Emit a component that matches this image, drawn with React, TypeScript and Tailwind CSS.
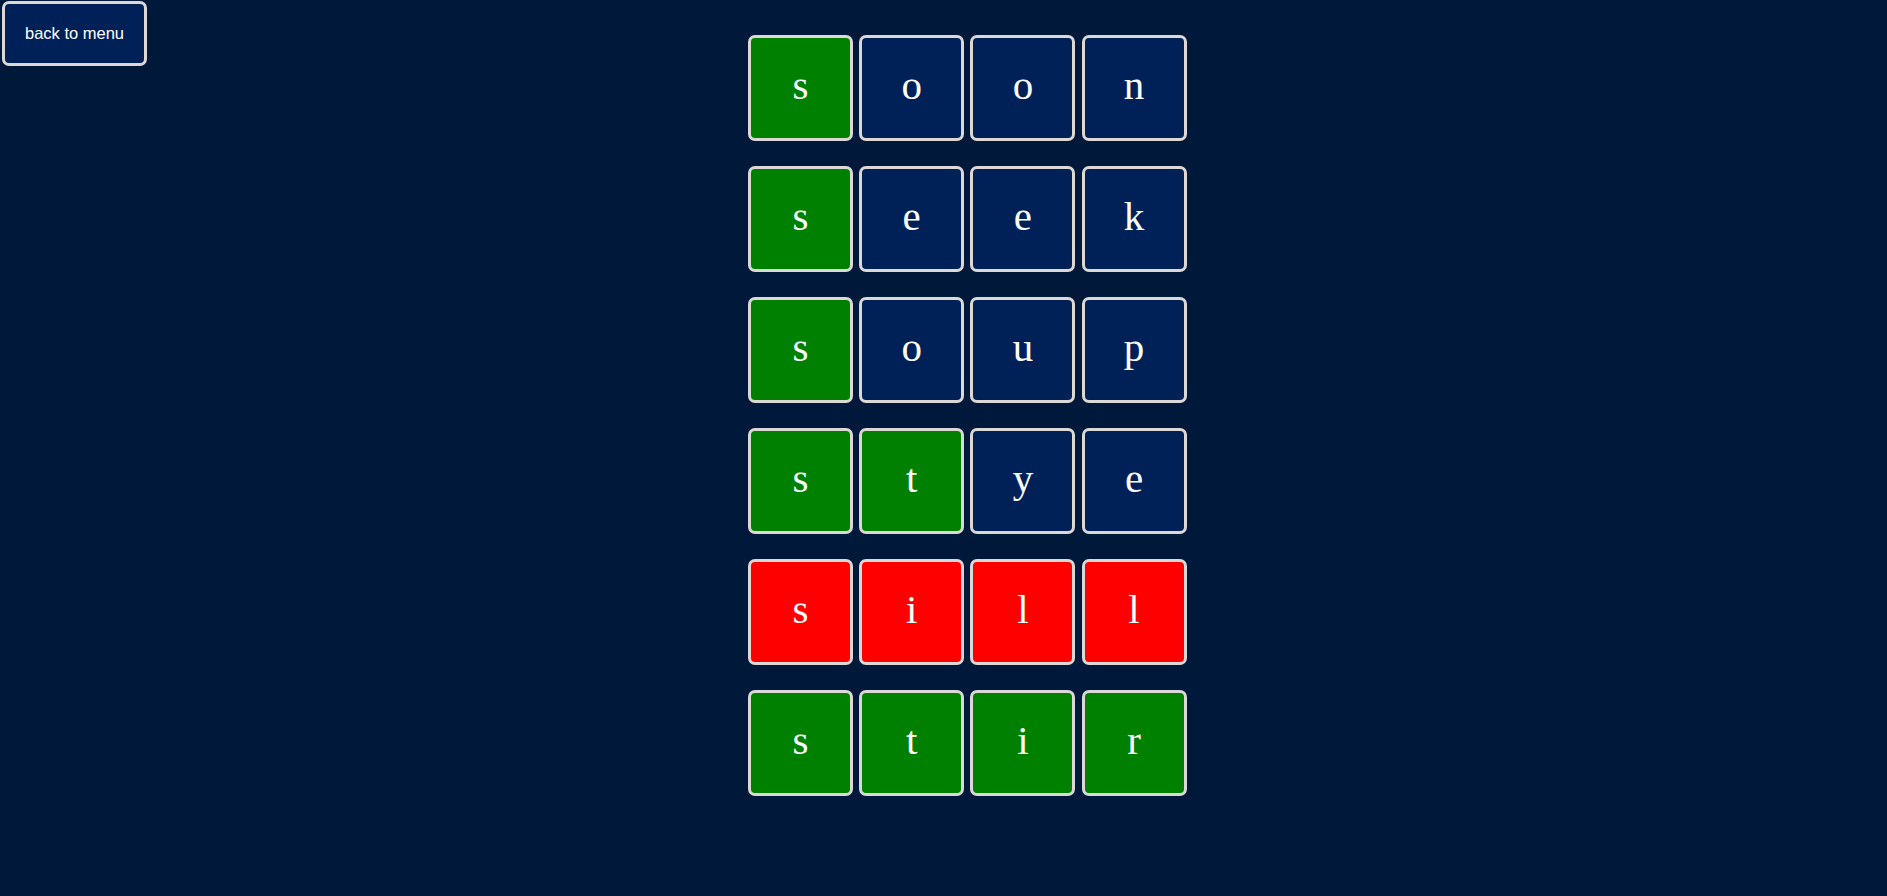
import React from "react";

type Tile = { ch: string; c: "g" | "n" | "r" };

const rows: Tile[][] = [
  [{ ch: "s", c: "g" }, { ch: "o", c: "n" }, { ch: "o", c: "n" }, { ch: "n", c: "n" }],
  [{ ch: "s", c: "g" }, { ch: "e", c: "n" }, { ch: "e", c: "n" }, { ch: "k", c: "n" }],
  [{ ch: "s", c: "g" }, { ch: "o", c: "n" }, { ch: "u", c: "n" }, { ch: "p", c: "n" }],
  [{ ch: "s", c: "g" }, { ch: "t", c: "g" }, { ch: "y", c: "n" }, { ch: "e", c: "n" }],
  [{ ch: "s", c: "r" }, { ch: "i", c: "r" }, { ch: "l", c: "r" }, { ch: "l", c: "r" }],
  [{ ch: "s", c: "g" }, { ch: "t", c: "g" }, { ch: "i", c: "g" }, { ch: "r", c: "g" }],
];

const bgClass: Record<Tile["c"], string> = {
  g: "bg-[#008000]",
  n: "bg-[#002157]",
  r: "bg-[#ff0000]",
};

export default function App() {
  return (
    <div className="min-h-screen w-full bg-[#00193b] flex items-start">
      <button
        className="ml-[2px] mt-[1px] w-[145px] h-[65px] rounded-[7px] border-[3px] border-[#dcd8d6] bg-[#002157] text-white text-[16.5px] shrink-0"
        style={{ fontFamily: '"Liberation Sans", Arial, sans-serif' }}
      >
        back to menu
      </button>
      <div className="ml-[601px] mt-[35px] flex flex-col gap-[25px]">
        {rows.map((row, i) => (
          <div key={i} className="flex gap-[6.2px]">
            {row.map((t, j) => (
              <div
                key={j}
                className={`w-[105px] h-[106px] rounded-[7px] border-[3px] border-[#dcd8d6] ${bgClass[t.c]} flex items-center justify-center pb-[5px] text-white text-[41px] leading-none`}
                style={{ fontFamily: '"Liberation Serif", "Times New Roman", serif' }}
              >
                {t.ch}
              </div>
            ))}
          </div>
        ))}
      </div>
    </div>
  );
}
